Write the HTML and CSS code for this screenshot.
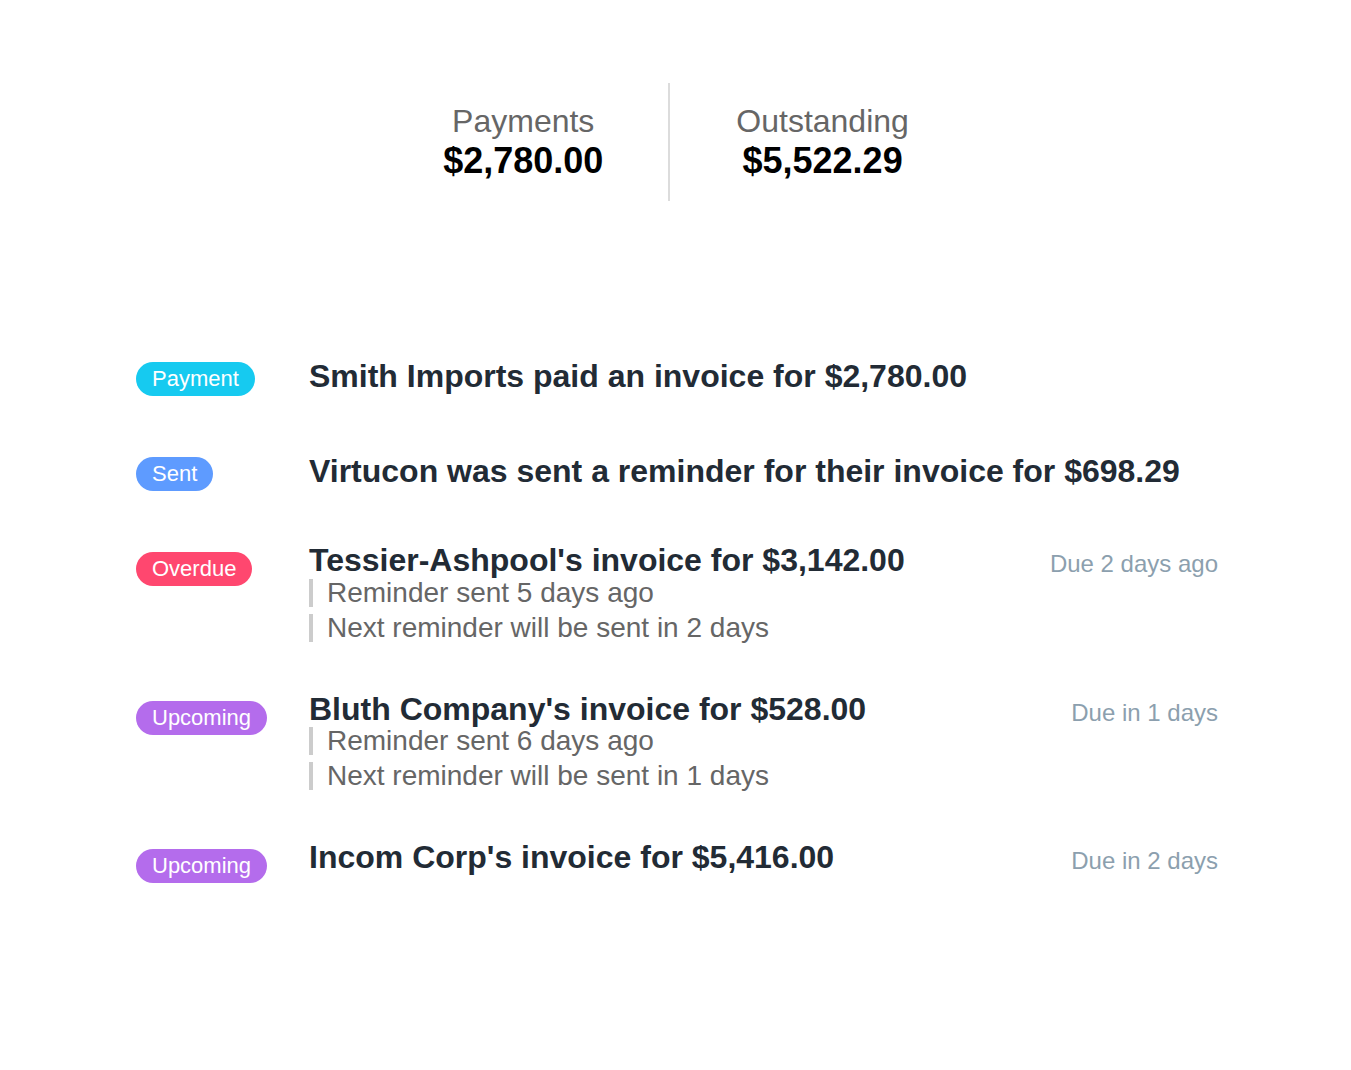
FILE: index.html
```html
<!DOCTYPE html>
<html lang="en">
<head>
    <meta charset="UTF-8">
    <meta name="viewport" content="width=device-width, initial-scale=1.0">
    <title>Invoices</title>
    <link rel="stylesheet" href="styles.css">
</head>
<body>

    <div class="stats">
        <div class="stat">
            <div class="stat-label">Payments</div>
            <div class="stat-value">$2,780.00</div>
        </div>
        <div class="stat">
            <div class="stat-label">Outstanding</div>
            <div class="stat-value">$5,522.29</div>
        </div>
    </div>

    <ul class="activity">
        <li class="row">
            <div class="badge-col"><span class="badge badge-payment">Payment</span></div>
            <div class="body">
                <div class="title title-simple">Smith Imports paid an invoice for $2,780.00</div>
            </div>
        </li>
        <li class="row">
            <div class="badge-col"><span class="badge badge-sent">Sent</span></div>
            <div class="body">
                <div class="title title-simple">Virtucon was sent a reminder for their invoice for $698.29</div>
            </div>
        </li>
        <li class="row row-detail">
            <div class="badge-col"><span class="badge badge-overdue">Overdue</span></div>
            <div class="body">
                <div class="title">Tessier-Ashpool's invoice for $3,142.00</div>
                <ul class="notes">
                    <li>Reminder sent 5 days ago</li>
                    <li>Next reminder will be sent in 2 days</li>
                </ul>
            </div>
            <div class="due">Due 2 days ago</div>
        </li>
        <li class="row row-detail">
            <div class="badge-col"><span class="badge badge-upcoming">Upcoming</span></div>
            <div class="body">
                <div class="title">Bluth Company's invoice for $528.00</div>
                <ul class="notes">
                    <li>Reminder sent 6 days ago</li>
                    <li>Next reminder will be sent in 1 days</li>
                </ul>
            </div>
            <div class="due">Due in 1 days</div>
        </li>
        <li class="row row-detail">
            <div class="badge-col"><span class="badge badge-upcoming">Upcoming</span></div>
            <div class="body">
                <div class="title">Incom Corp's invoice for $5,416.00</div>
            </div>
            <div class="due">Due in 2 days</div>
        </li>
    </ul>

</body>
</html>
```

FILE: styles.css
```css
body {
    font-family: "Liberation Sans", Arial, sans-serif;
    margin: 0;
    color: #222b35;
    background: #fff;
}

.stats {
    display: flex;
    justify-content: center;
    margin-top: 83px;
}

.stat {
    padding: 20px 66px;
    text-align: center;
}

.stat:first-child {
    padding-left: 67px;
    padding-right: 65px;
}

.stat + .stat {
    border-left: 2px solid #dcdcdc;
}

.stat-label {
    font-size: 32px;
    line-height: 36.8px;
    color: #666;
}

.stat-value {
    font-size: 36px;
    line-height: 41.4px;
    font-weight: bold;
    color: #000;
}

.activity {
    list-style: none;
    margin: 149px 133px 0 136px;
    padding: 0;
}

.row {
    display: flex;
    align-items: flex-start;
    margin-bottom: 49px;
}

.row-detail {
    margin-bottom: 47px;
}

.badge-col {
    flex: 0 0 173px;
    padding-top: 12px;
}

.badge {
    display: inline-block;
    font-size: 22px;
    line-height: 26px;
    padding: 4px 16px;
    border-radius: 17px;
    color: #fff;
}

.badge-payment {
    background-color: #16caf0;
}

.badge-sent {
    background-color: #5e9bff;
}

.badge-overdue {
    background-color: #ff476f;
}

.badge-upcoming {
    background-color: #b46cec;
}

.body {
    flex: 1;
}

.title {
    font-size: 32px;
    line-height: 38.4px;
    font-weight: bold;
}

.row-detail .title {
    padding-top: 1px;
}

.title-simple {
    padding-top: 7px;
}

.notes {
    list-style: none;
    margin: -1px 0 0 0;
    padding: 0;
}

.notes li {
    font-size: 28px;
    line-height: 28px;
    color: #666;
    border-left: 4px solid #cccccc;
    padding-left: 14px;
}

.notes li + li {
    margin-top: 7px;
}

.due {
    font-size: 24px;
    line-height: 28px;
    margin-top: 10px;
    color: #8c9fae;
    white-space: nowrap;
}
```
